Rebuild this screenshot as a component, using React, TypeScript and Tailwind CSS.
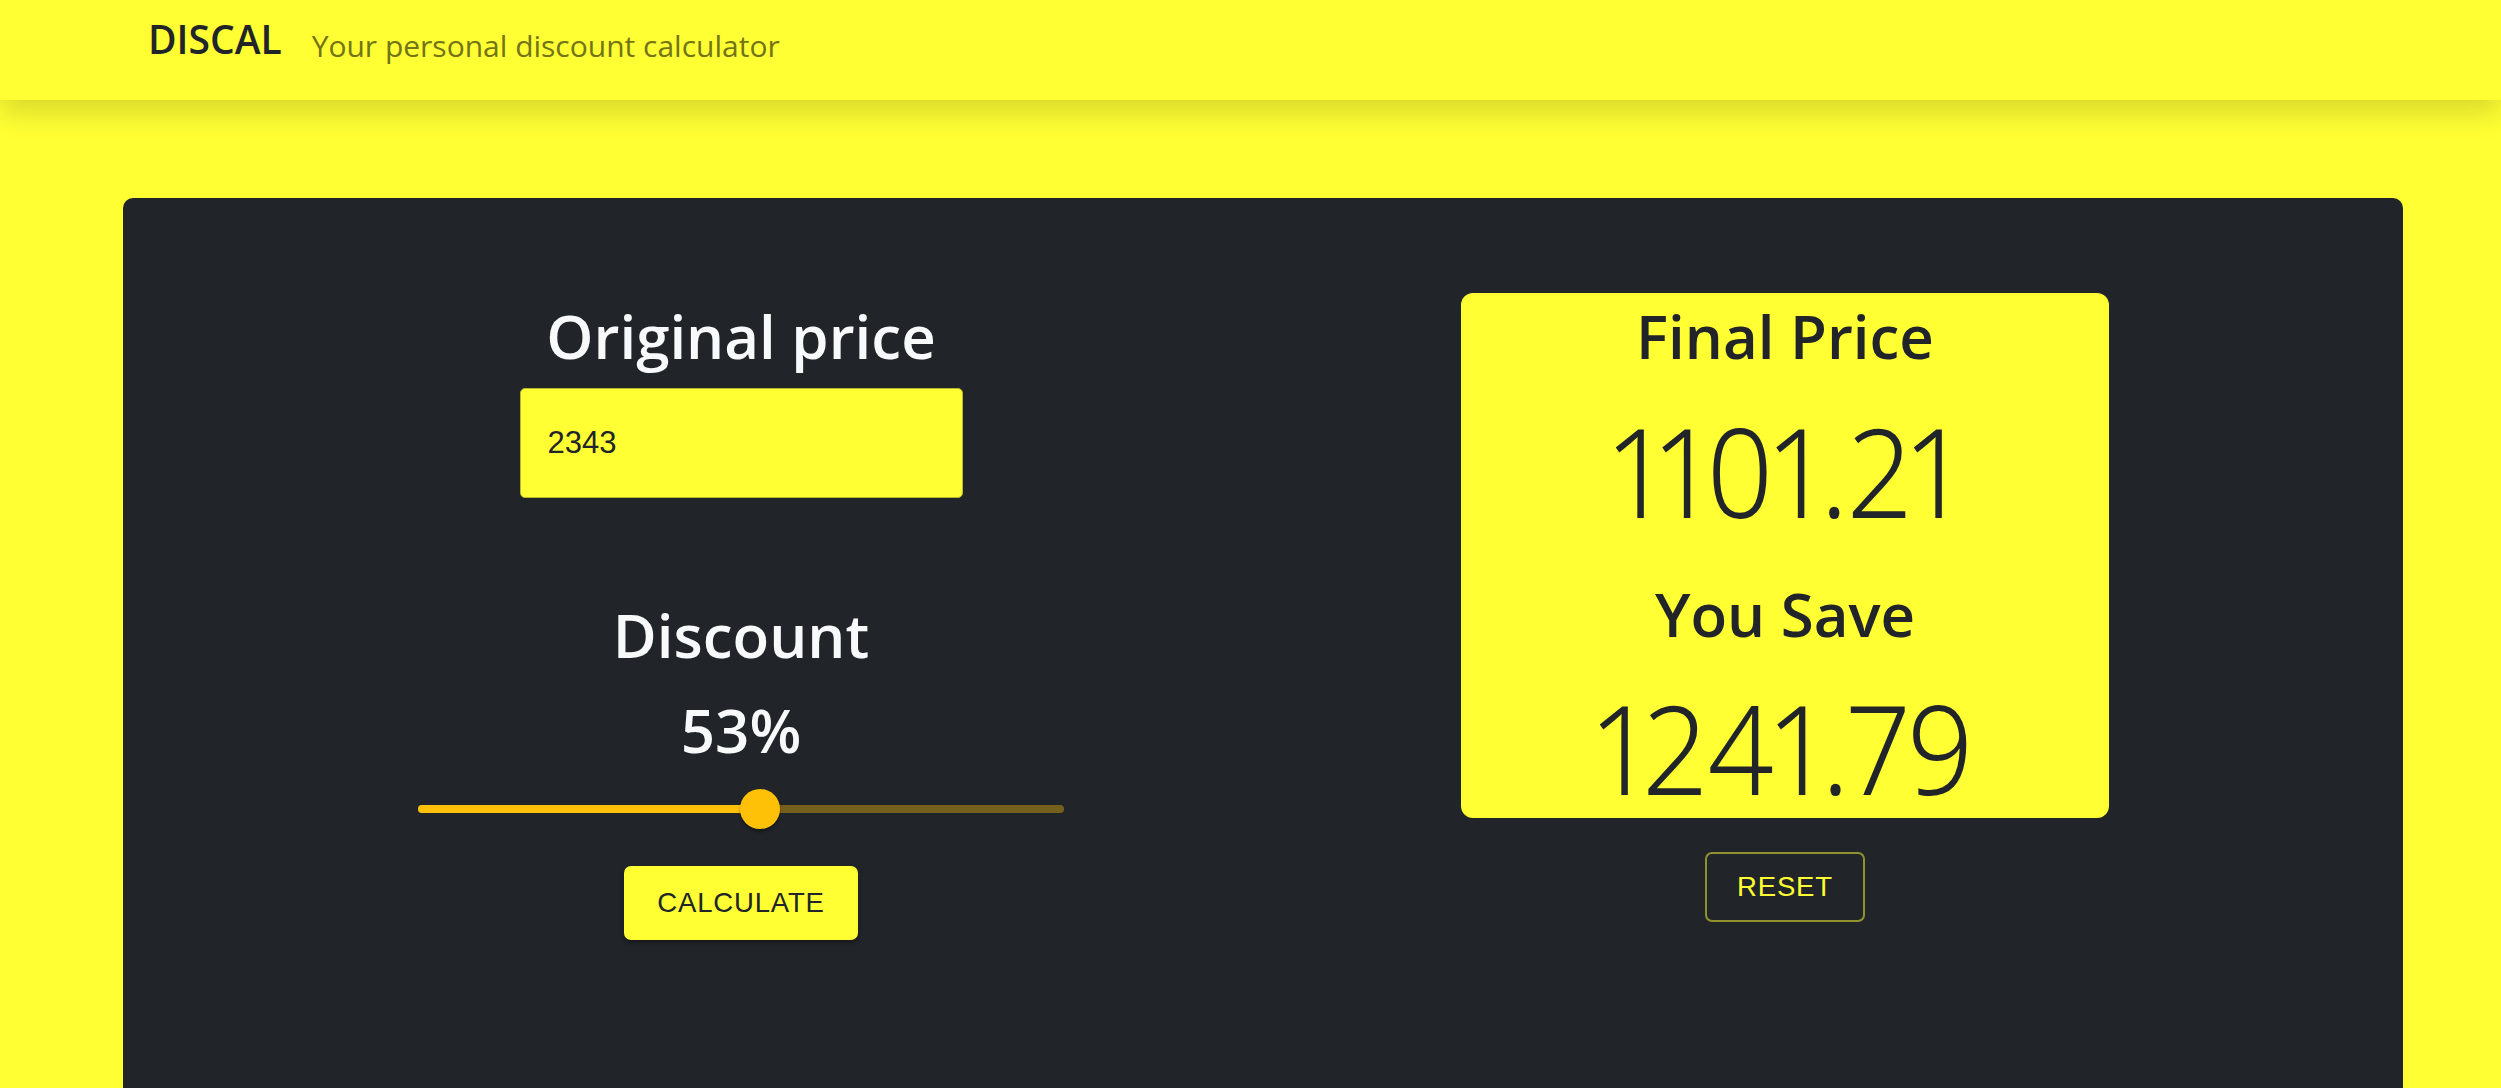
import { useState } from 'react';

const heading = { fontFamily: '"Open Sans", "Noto Sans", sans-serif' };
const arial = { fontFamily: '"Liberation Sans", Arial, sans-serif' };
const thin = { fontFamily: '"Noto Sans", "Open Sans", sans-serif' };

function Slider({ value }: { value: number }) {
  return (
    <div className="relative mt-[20px] h-[40px] w-[646px]">
      <div className="absolute left-0 right-0 top-[16px] h-[8px] rounded-full bg-[#ffc107] opacity-[0.38]" />
      <div className="absolute left-0 top-[16px] h-[8px] rounded-full bg-[#ffc107]" style={{ width: `${value}%` }} />
      <div
        className="absolute top-0 h-[40px] w-[40px] -translate-x-1/2 rounded-full bg-[#ffc107] shadow-[0_3px_3px_rgba(0,0,0,0.3)]"
        style={{ left: `${value}%` }}
      />
    </div>
  );
}

function BigNumber({ children, className }: { children: string; className: string }) {
  return (
    <div
      className={`inline-block origin-center scale-x-[0.935] text-[124px] font-light leading-none proportional-nums ${className}`}
      style={thin}
    >
      {children}
    </div>
  );
}

export default function App() {
  const [price] = useState('2343');
  const [discount] = useState(53);

  return (
    <div className="min-h-screen bg-[#ffff33]" style={heading}>
      <nav className="relative z-10 flex h-[100px] items-center bg-[#ffff33] pl-[148px] shadow-[0_13px_26px_rgba(0,0,0,0.15)]">
        <span className="-mt-[24px] text-[39px] font-semibold leading-none text-[#212529]">DISCAL</span>
        <span className="-mt-[8px] ml-[30px] text-[30px] leading-none text-[#737317]">Your personal discount calculator</span>
      </nav>

      <div className="pl-[123px] pr-[98px] pt-[98px]">
        <div className="grid min-h-[890px] grid-cols-2 rounded-t-[10px] bg-[#212529] px-[96px] pt-[95px]">
          <div className="flex flex-col items-center pt-[5px]">
            <h1 className="text-[60px] font-semibold leading-[77px] text-[#f8f9fa]">Original price</h1>
            <input
              readOnly
              value={price}
              className="mt-[13px] h-[110px] w-[443px] rounded-[5px] border border-[#b8b82a] bg-[#ffff33] pl-[27px] text-[31px] text-[#212529] outline-none"
              style={arial}
            />
            <h2 className="mt-[99px] text-[60px] font-semibold leading-[77px] text-[#f8f9fa]">Discount</h2>
            <div className="mt-[18px] text-[60px] font-semibold leading-[77px] text-[#f8f9fa]">{discount}%</div>
            <Slider value={discount} />
            <button
              className="mt-[37px] h-[74px] w-[234px] rounded-[7px] bg-[#ffff33] text-[27.5px] tracking-[0.03em] text-[#212529] shadow-[0_3px_4px_rgba(0,0,0,0.35)]"
              style={arial}
            >
              CALCULATE
            </button>
          </div>

          <div className="flex flex-col items-center">
            <div className="flex h-[525px] w-[648px] flex-col items-center rounded-[12px] bg-[#ffff33] pt-[5px] text-[#212529]">
              <h1 className="text-[60px] font-semibold leading-[77px]">Final Price</h1>
              <BigNumber className="mt-[33px]">1101.21</BigNumber>
              <h1 className="mt-[44px] text-[60px] font-semibold leading-[77px]">You Save</h1>
              <BigNumber className="mt-[32px]">1241.79</BigNumber>
            </div>
            <button
              className="mt-[34px] h-[70px] w-[160px] rounded-[7px] border-2 border-[#ffff33]/50 text-[27.5px] tracking-[0.03em] text-[#ffff33]"
              style={arial}
            >
              RESET
            </button>
          </div>
        </div>
      </div>
    </div>
  );
}
